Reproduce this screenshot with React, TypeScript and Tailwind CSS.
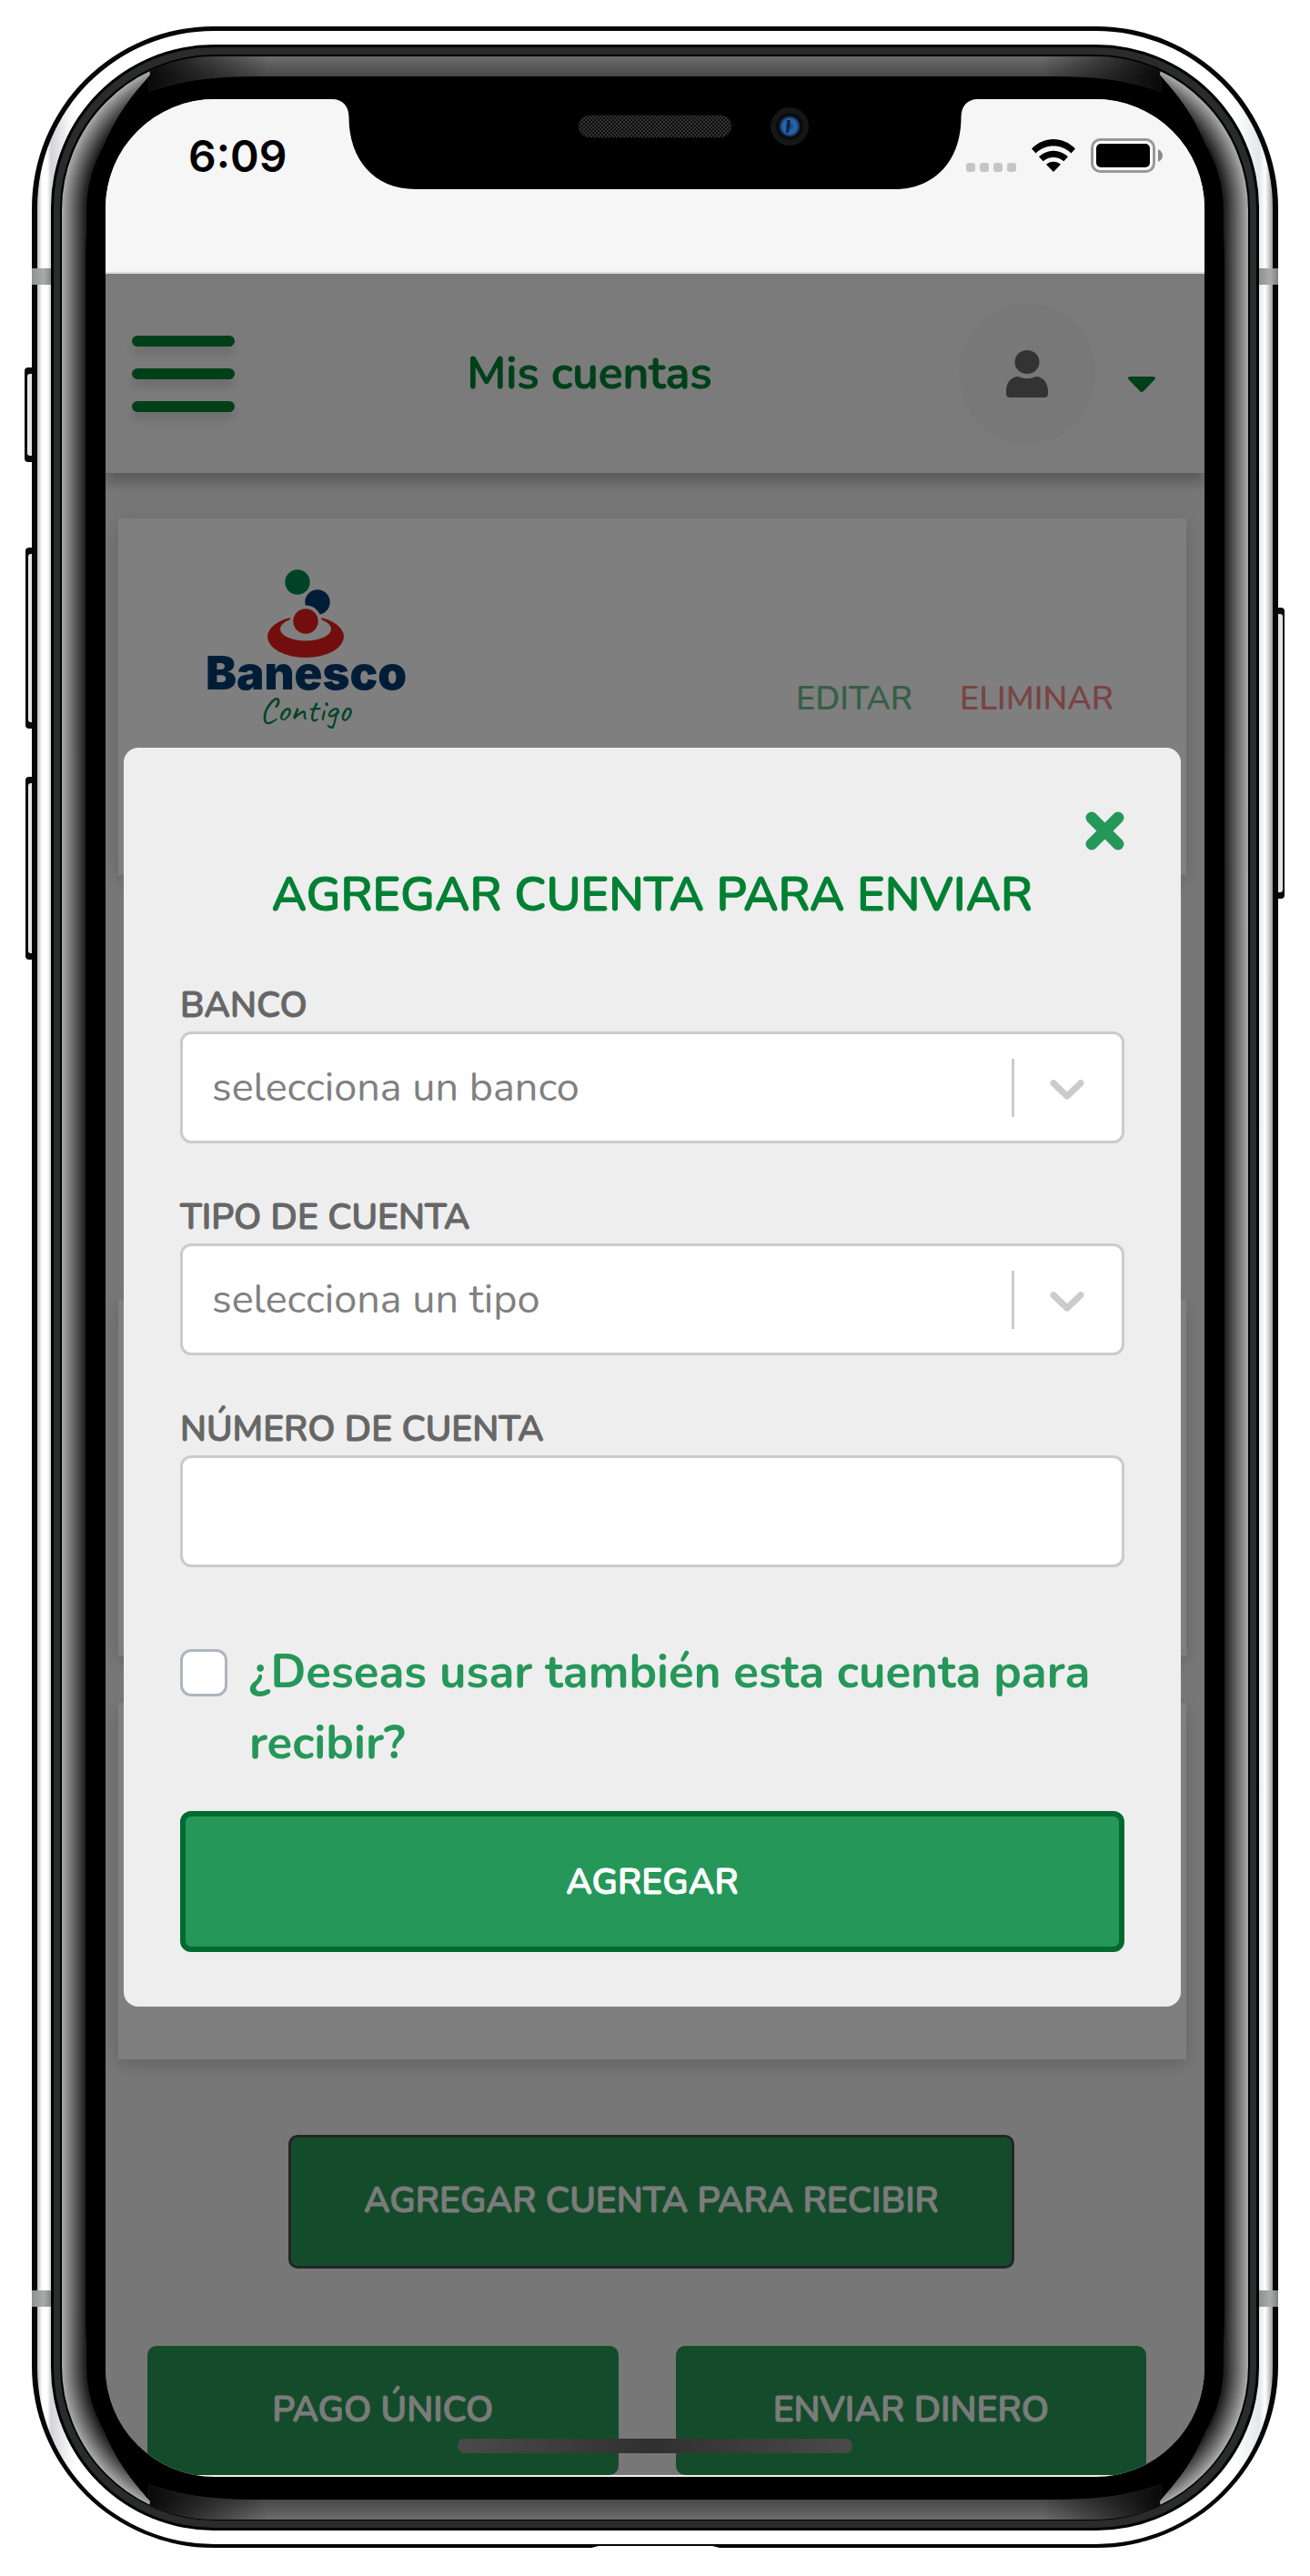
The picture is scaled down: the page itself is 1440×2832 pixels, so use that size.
import React, { useId } from "react";

const SIDE_GRAYS = Array.from({ length: 26 }, (_, i) => Math.round(168 - i * 5.4));

const SIDE_BAND =
  "M0 0H150L165 82C136 116 94 160 94 290V2542C94 2672 136 2716 165 2750L150 2832H0Z";
const TOP_BAND = "M165 60L163 101C200 88 236 84 280 84H1160C1204 84 1240 88 1277 101L1275 60Z";

function ButtonShape({ x, y, w, h }: { x: number; y: number; w: number; h: number }) {
  return (
    <g>
      <rect x={x} y={y} width={w} height={h} rx="4" fill="#0a0a0a" />
      <rect x={x + 3} y={y + 7} width={w - 5} height={h - 14} rx="3" fill="#e4e6e6" />
    </g>
  );
}

function PhoneShell() {
  return (
    <svg
      aria-hidden="true"
      viewBox="0 0 1440 2832"
      preserveAspectRatio="none"
      className="absolute inset-0 h-full w-full"
    >
      <defs>
        <linearGradient id="steel" x1="0" x2="1">
          <stop offset="0" stopColor="#bdbdc0" />
          <stop offset="0.004" stopColor="#fff" />
          <stop offset="0.008" stopColor="#fff" />
          <stop offset="0.011" stopColor="#d4d4d8" />
          <stop offset="0.03" stopColor="#fff" />
          <stop offset="0.97" stopColor="#fff" />
          <stop offset="0.989" stopColor="#e4e6ea" />
          <stop offset="0.994" stopColor="#fff" />
          <stop offset="1" stopColor="#9c9c9e" />
        </linearGradient>
        <linearGradient id="topGlow" x1="0" x2="0" y1="62" y2="84" gradientUnits="userSpaceOnUse">
          <stop offset="0" stopColor="#6c6c6c" />
          <stop offset="1" stopColor="#474747" />
        </linearGradient>
        <linearGradient id="endFade" x1="160" x2="1280" gradientUnits="userSpaceOnUse">
          <stop offset="0" stopColor="#000" stopOpacity="0.9" />
          <stop offset="0.12" stopColor="#000" stopOpacity="0" />
          <stop offset="0.88" stopColor="#000" stopOpacity="0" />
          <stop offset="1" stopColor="#000" stopOpacity="0.9" />
        </linearGradient>
        <linearGradient id="cornerShade" x1="75" y1="160" x2="170" y2="62" gradientUnits="userSpaceOnUse">
          <stop offset="0" stopColor="#bbb" stopOpacity="0" />
          <stop offset="0.4" stopColor="#555" />
          <stop offset="0.7" stopColor="#777" />
          <stop offset="1" stopColor="#cfcfcf" />
        </linearGradient>
        <linearGradient id="antenna" x1="0" x2="1">
          <stop offset="0" stopColor="#8c9290" />
          <stop offset="0.6" stopColor="#a9abab" />
          <stop offset="1" stopColor="#7f8080" />
        </linearGradient>
        <clipPath id="leftSide">
          <path d={SIDE_BAND} />
        </clipPath>
        <g id="corner">
          <path d="M76 168C92 120 122 84 172 62C144 84 112 112 88 150Z" fill="url(#cornerShade)" />
        </g>
        <g id="side">
          <g clipPath="url(#leftSide)" fill="none" strokeWidth="2">
            {SIDE_GRAYS.map((g, i) => (
              <rect
                key={i}
                x={69 + i}
                y={63 + i}
                width={1302 - 2 * i}
                height={2706 - 2 * i}
                rx={168 - i}
                stroke={`rgb(${g},${g},${g})`}
              />
            ))}
          </g>
        </g>
        <g id="cornerPair">
          <use href="#corner" />
          <use href="#corner" transform="matrix(1 0 0 -1 0 2832)" />
        </g>
        <g id="glass">
          <path d={TOP_BAND} fill="url(#topGlow)" />
          <path d={TOP_BAND} fill="url(#endFade)" />
        </g>
        <clipPath id="glassArea">
          <rect x="68" y="62" width="1304" height="2708" rx="168" />
        </clipPath>
      </defs>
      <ButtonShape x={27} y={404} w={14} h={104} />
      <ButtonShape x={28} y={602} w={14} h={199} />
      <ButtonShape x={28} y={854} w={14} h={201} />
      <ButtonShape x={1399} y={668} w={13} h={320} />
      <rect x="35" y="29" width="1370" height="2772" rx="200" fill="#060606" />
      <path d="M646 2802L658 2799H783L795 2802Z" fill="#fff" />
      <rect x="41" y="34" width="1358" height="2763" rx="194" fill="url(#steel)" />
      <use href="#cornerPair" />
      <use href="#cornerPair" transform="matrix(-1 0 0 1 1440 0)" />
      <rect x="35" y="295" width="22" height="18" fill="url(#antenna)" />
      <rect x="1383" y="295" width="22" height="18" fill="url(#antenna)" />
      <rect x="35" y="2518" width="22" height="18" fill="url(#antenna)" />
      <rect x="1383" y="2518" width="22" height="18" fill="url(#antenna)" />
      <rect x="56" y="49" width="1328" height="2733" rx="179" fill="#000" />
      <rect x="59" y="52" width="1322" height="2727" rx="176" fill="#2a2b2b" />
      <rect x="66" y="60" width="1308" height="2711" rx="170" fill="#000" />
      <g clipPath="url(#glassArea)">
        <use href="#glass" />
        <use href="#glass" transform="matrix(1 0 0 -1 0 2832)" />
      </g>
      <use href="#side" />
      <use href="#side" transform="matrix(-1 0 0 1 1440 0)" />
    </svg>
  );
}

function Notch() {
  return (
    <svg
      aria-hidden="true"
      viewBox="0 0 710 99"
      className="pointer-events-none absolute top-0 left-1/2 w-[710px] -translate-x-1/2"
    >
      <defs>
        <pattern id="mesh" width="4" height="4" patternUnits="userSpaceOnUse">
          <rect width="4" height="4" fill="#0c0c0c" />
          <circle cx="1" cy="1" r="1" fill="#444" />
          <circle cx="3" cy="3" r="1" fill="#444" />
        </pattern>
        <radialGradient id="lens">
          <stop offset="0" stopColor="#153a6e" />
          <stop offset="0.5" stopColor="#2b69b4" />
          <stop offset="0.75" stopColor="#1f5596" />
          <stop offset="1" stopColor="#0b0b0d" />
        </radialGradient>
      </defs>
      <path
        d="M0 0C12 0 18.500 8 18.500 20C18.500 66 46 99 92 99H618C664 99 691.500 66 691.500 20C691.500 8 698 0 710 0Z"
        fill="#000"
      />
      <rect x="271" y="18" width="168" height="24" rx="12" fill="url(#mesh)" stroke="#1c1c1c" />
      <circle cx="503" cy="30" r="21" fill="#151717" />
      <circle cx="503" cy="30" r="15" fill="#0b0b0d" />
      <circle cx="503" cy="30" r="12" fill="url(#lens)" />
      <path d="M500 23H504L502 37H499Z" fill="#0e2444" />
    </svg>
  );
}

function StatusBar() {
  return (
    <div className="flex h-48 items-start justify-between border-b-2 border-[#dedede] bg-[#f6f6f6] pt-8 pr-[46px] pl-[91px]">
      <time className="font-['Inter',sans-serif] text-[48px] leading-[62px] font-semibold text-black">6:09</time>
      <div className="flex h-[60px] items-center gap-[17px]">
        <div className="flex gap-[5px] pt-[26px]">
          <span className="size-[10px] rounded-[3px] bg-[#c5c5c5]" />
          <span className="size-[10px] rounded-[3px] bg-[#c5c5c5]" />
          <span className="size-[10px] rounded-[3px] bg-[#c5c5c5]" />
          <span className="size-[10px] rounded-[3px] bg-[#c5c5c5]" />
        </div>
        <svg viewBox="0 0 48 36" className="h-9 w-12" aria-hidden="true">
          <path d="M0 10.500C13.500-3.500 34.500-3.500 48 10.500L43.400 15.500C32.500 4.900 15.500 4.900 4.600 15.500Z" />
          <path d="M8 19.300C17 10.400 31 10.400 40 19.300L35.300 24.300C29 18.400 19 18.400 12.700 24.300Z" />
          <path d="M16 27.700C20.500 23.700 27.500 23.700 32 27.700L24 36Z" />
        </svg>
        <svg viewBox="0 0 79 38" className="h-[38px] w-[79px]" aria-hidden="true">
          <rect x="1.500" y="1.500" width="68" height="35" rx="9" fill="#fff" stroke="#989898" strokeWidth="3" />
          <rect x="6" y="6" width="59" height="26" rx="5" />
          <path d="M74 12C77 13.500 79 16 79 19S77 24.500 74 26Z" fill="#8a8a8a" />
        </svg>
      </div>
    </div>
  );
}

function HamburgerButton() {
  return (
    <button type="button" aria-label="Menú" className="flex w-[113px] flex-col gap-6">
      <span className="h-3 rounded-full bg-[#008033] shadow-[0_8px_12px_rgba(0,60,20,0.15)]" />
      <span className="h-3 rounded-full bg-[#008033] shadow-[0_8px_12px_rgba(0,60,20,0.15)]" />
      <span className="h-3 rounded-full bg-[#008033] shadow-[0_8px_12px_rgba(0,60,20,0.15)]" />
    </button>
  );
}

function Header() {
  return (
    <header className="relative flex h-[219px] items-center bg-[#f7f7f7] pr-[54px] pl-[29px] shadow-[0_10px_14px_rgba(0,0,0,0.25)]">
      <HamburgerButton />
      <h1 className="flex-1 pr-4 text-center text-[50px] leading-[64px] font-semibold text-[#008033] [-webkit-text-stroke:1px]">
        Mis cuentas
      </h1>
      <button type="button" aria-label="Perfil" className="flex items-center gap-9">
        <span className="flex h-[155px] w-[150px] items-center justify-center rounded-[50%] bg-[#f1f1f1]">
          <svg viewBox="0 0 46 52" className="h-[52px] w-[46px]" fill="#666" aria-hidden="true">
            <ellipse cx="23" cy="13" rx="13.500" ry="13" />
            <path d="M11 29C14 28.500 17 31 23 31S32 28.500 35 29C42 31 46 37 46 45V48C46 51 44 52 42 52H4C2 52 0 51 0 48V45C0 37 4 31 11 29Z" />
          </svg>
        </span>
        <svg viewBox="0 0 30 17" className="mt-6 h-[17px] w-[30px]" fill="#008033" aria-hidden="true">
          <path d="M2 0H28C30 0 30.500 2 29.300 3.200L17 16C15.800 17.300 14.200 17.300 13 16L0.700 3.200C-0.500 2 0 0 2 0Z" />
        </svg>
      </button>
    </header>
  );
}

function BanescoLogo() {
  return (
    <svg viewBox="0 0 224 180" className="h-[180px] w-[224px] overflow-visible" role="img" aria-label="Banesco Contigo">
      <circle cx="100" cy="14" r="13.700" fill="#00884a" />
      <circle cx="122" cy="36" r="13.700" fill="#003a70" />
      <path
        fillRule="evenodd"
        fill="#e41e1c"
        d="M67 74A42 23 0 1 0 151 74A42 23 0 1 0 67 74ZM81 65.500A28 13 0 1 1 137 65.500A28 13 0 1 1 81 65.500Z"
      />
      <circle cx="109" cy="57" r="17.500" fill="#fff" />
      <circle cx="109" cy="57" r="13.700" fill="#e41e1c" />
      <text x="-1" y="132" fill="#003a70" className="font-['Inter',sans-serif] text-[51px] font-black">Banesco</text>
      <text x="58" y="167" fill="#00884a" className="font-['Caveat','Lato',cursive] text-[40px]">Contigo</text>
    </svg>
  );
}

function AccountCard({ children }: { children?: React.ReactNode }) {
  return (
    <article className="min-h-[392px] bg-white px-20 pt-14 shadow-[0_6px_20px_rgba(0,0,0,0.18)]">{children}</article>
  );
}

function SelectField({ label, placeholder }: { label: string; placeholder: string }) {
  const id = useId();
  return (
    <div>
      <label htmlFor={id} className="block pt-1 text-[39px] leading-[56px] font-semibold text-[#666] [-webkit-text-stroke:1px]">
        {label}
      </label>
      <div className="flex h-[123px] items-center rounded-xl border-3 border-[#cbcbcb] bg-white pr-7">
        <select id={id} className="h-full min-w-0 flex-1 appearance-none bg-transparent pl-8 text-[45px] text-[#808080]">
          <option>{placeholder}</option>
        </select>
        <span className="mr-[26px] h-16 w-[3px] bg-[#cbcbcb]" />
        <svg viewBox="0 0 20 20" className="size-16" fill="#cbcbcb" aria-hidden="true">
          <path d="M4.516 7.548c0.436-0.446 1.043-0.481 1.576 0l3.908 3.747 3.908-3.747c0.533-0.481 1.141-0.446 1.574 0 0.436 0.445 0.408 1.197 0 1.615-0.406 0.418-4.695 4.502-4.695 4.502-0.217 0.223-0.502 0.335-0.787 0.335s-0.570-0.112-0.789-0.335c0 0-4.287-4.084-4.695-4.502s-0.436-1.170 0-1.615z" />
        </svg>
      </div>
    </div>
  );
}

function AddAccountDialog() {
  return (
    <form
      role="dialog"
      aria-labelledby="dialog-title"
      className="absolute top-[521px] right-[26px] left-5 rounded-2xl bg-[#eee] px-[62px] pt-[70px] pb-[60px]"
    >
      <div className="flex justify-end">
        <button type="button" aria-label="Cerrar">
          <svg viewBox="0 0 43 43" className="size-[43px]" aria-hidden="true">
            <path d="M7 7L36 36M36 7L7 36" stroke="#259759" strokeWidth="13" strokeLinecap="round" />
          </svg>
        </button>
      </div>
      <h2
        id="dialog-title"
        className="mt-[17px] mb-[58px] text-center text-[52px] leading-[64px] font-semibold whitespace-nowrap text-[#008033] [-webkit-text-stroke:1px]"
      >
        AGREGAR CUENTA PARA ENVIAR
      </h2>
      <div className="flex flex-col gap-[50px]">
        <SelectField label="BANCO" placeholder="selecciona un banco" />
        <SelectField label="TIPO DE CUENTA" placeholder="selecciona un tipo" />
        <div>
          <label
            htmlFor="account-number"
            className="block pt-1 text-[39px] leading-[56px] font-semibold text-[#666] [-webkit-text-stroke:1px]"
          >
            NÚMERO DE CUENTA
          </label>
          <input
            id="account-number"
            type="text"
            className="block h-[123px] w-full rounded-xl border-3 border-[#cbcbcb] bg-white px-8 text-[45px] text-[#808080]"
          />
        </div>
      </div>
      <div className="mt-[76px] flex items-start gap-6">
        <input
          id="receive-too"
          type="checkbox"
          className="mt-[14px] size-[52px] shrink-0 appearance-none rounded-xl border-3 border-[#adb5bd] bg-white"
        />
        <label htmlFor="receive-too" className="text-[51px] leading-[78px] font-bold text-[#259759]">
          ¿Deseas usar también esta cuenta para recibir?
        </label>
      </div>
      <button
        type="submit"
        className="mt-9 block h-[155px] w-full rounded-xl border-6 border-[#006a2f] bg-[#259759] pt-1 text-[39px] font-semibold text-white [-webkit-text-stroke:1px]"
      >
        AGREGAR
      </button>
    </form>
  );
}

export default function App() {
  return (
    <div className="relative min-h-screen w-full bg-white px-[116px] py-[109px] font-['Nunito','Open_Sans',sans-serif]">
      <PhoneShell />
      <main className="relative overflow-hidden rounded-[120px] bg-[#efefef]">
        <StatusBar />
        <div className="relative">
          <Header />
          <section className="pt-[50px] pr-5 pl-[14px]">
            <AccountCard>
              <div className="flex items-end justify-between pl-[17px]">
                <BanescoLogo />
                <div className="flex gap-[52px] text-[36px] leading-[54px] font-semibold">
                  <button type="button" className="pt-3 pb-[10px] text-[#6ebe8c]">EDITAR</button>
                  <button type="button" className="pt-3 pb-[10px] text-[#f08888]">ELIMINAR</button>
                </div>
              </div>
            </AccountCard>
            <div className="mt-[466px] flex flex-col gap-[52px]">
              <AccountCard />
              <AccountCard />
            </div>
          </section>
          <div className="mt-[83px] mr-[209px] ml-[201px]">
            <button
              type="button"
              className="block h-[147px] w-full rounded-[10px] border-3 border-[#4a4a4a] bg-[#289856] text-[39px] font-semibold text-[#f7f7f7] [-webkit-text-stroke:1px]"
            >
              AGREGAR CUENTA PARA RECIBIR
            </button>
          </div>
          <div className="mt-[85px] mb-[2px] grid grid-cols-2 gap-[63px] pr-16 pl-[46px] text-[39px] font-semibold text-[#f7f7f7] [-webkit-text-stroke:1px]">
            <button type="button" className="h-[142px] rounded-[10px] bg-[#289856]">PAGO ÚNICO</button>
            <button type="button" className="h-[142px] rounded-[10px] bg-[#289856]">ENVIAR DINERO</button>
          </div>
          <div className="absolute inset-0 bg-black/50" />
          <AddAccountDialog />
          <div className="absolute bottom-6 left-1/2 h-4 w-[434px] -translate-x-1/2 rounded-full bg-linear-to-r from-[#4a4a4a] via-[#303030] to-[#4a4a4a]" />
        </div>
        <Notch />
      </main>
    </div>
  );
}
